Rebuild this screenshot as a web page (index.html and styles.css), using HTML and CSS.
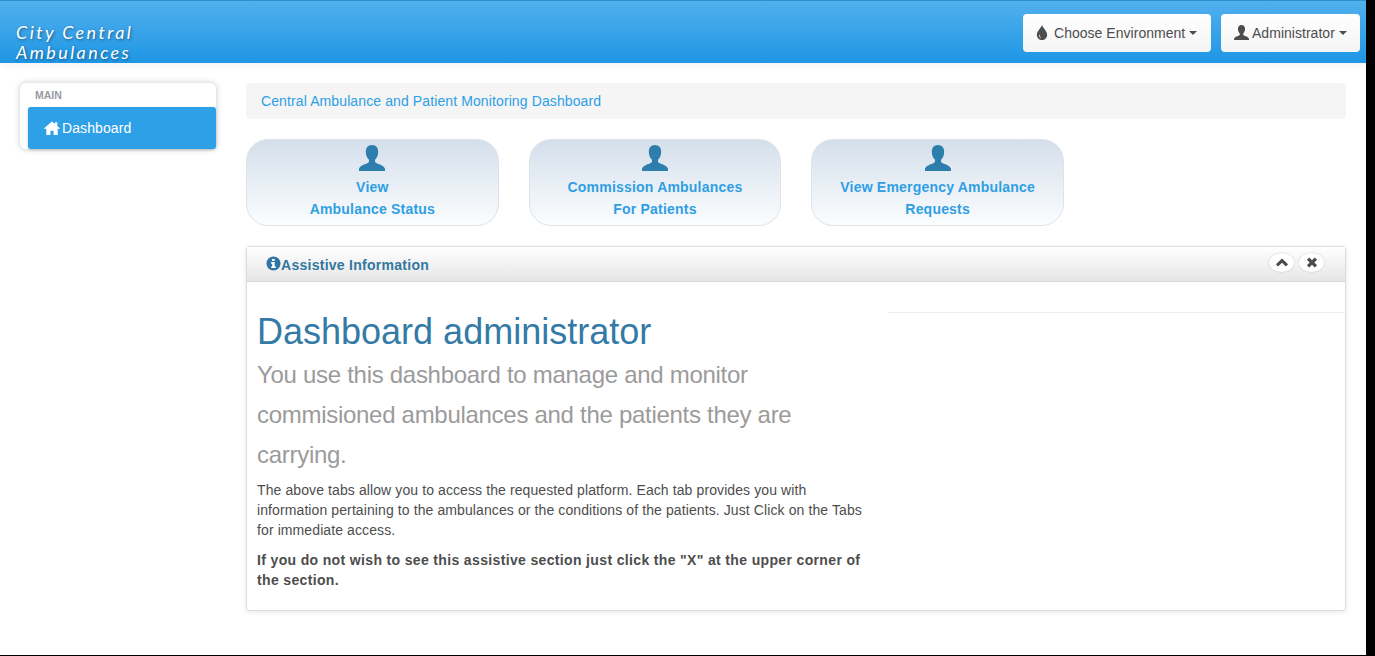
FILE: index.html
```html
<!DOCTYPE html>
<html lang="en">
<head>
<meta charset="utf-8">
<title>City Central Ambulances</title>
<link rel="stylesheet" href="styles.css">
</head>
<body>
<svg class="defs" width="0" height="0" aria-hidden="true">
  <symbol id="user" viewBox="0 0 24 24"><path d="M12 0C8 0 6.300 2.900 6.300 6.500c0 3 1.200 5.500 2.900 7v1.500c0 1-.8 1.500-2 2C4.500 18 1 19 0 22v2h24v-2c-1-3-4.500-4-7.200-5-1.200-.5-2-1-2-2v-1.500c1.700-1.500 2.900-4 2.900-7C17.700 2.900 16 0 12 0z"/></symbol>
</svg>
<div class="app">
  <header class="navbar">
    <a class="brand">City Central<br>Ambulances</a>
    <div class="nav-actions">
      <button class="nav-btn env">
        <svg class="ic-drop" viewBox="0 0 14 16"><path fill-rule="evenodd" d="M7 0c.6 2.600 5.500 6.500 5.500 10.300C12.500 13.500 10 16 7 16s-5.500-2.500-5.500-5.700C1.500 6.500 6.400 2.600 7 0zM4 9.500c-.6 2 .4 4 2.300 4.500-1-1-1.800-2.500-2.300-4.500z"/></svg>
        <span class="nav-label">Choose Environment</span><span class="caret"></span>
      </button>
      <button class="nav-btn admin">
        <svg class="ic-user"><use href="#user"/></svg><span class="nav-label">Administrator</span><span class="caret"></span>
      </button>
    </div>
  </header>
  <div class="layout">
    <aside class="sidebar">
      <div class="side-label">MAIN</div>
      <a class="side-item">
        <svg class="ic-home" viewBox="0 0 18 16"><path d="M9 .5 0 8.300l1 1.200 1.500-1.200V16h4.700v-5h3.600v5h4.700V8.300l1.500 1.200 1-1.200-3-2.600V1.500h-2.500v2L9 .5z"/></svg>Dashboard
      </a>
    </aside>
    <main class="content">
      <div class="crumb">Central Ambulance and Patient Monitoring Dashboard</div>
      <div class="tiles">
        <a class="tile"><svg class="ic-tile"><use href="#user"/></svg><span>View</span><span>Ambulance Status</span></a>
        <a class="tile"><svg class="ic-tile"><use href="#user"/></svg><span>Commission Ambulances</span><span>For Patients</span></a>
        <a class="tile"><svg class="ic-tile"><use href="#user"/></svg><span>View Emergency Ambulance</span><span>Requests</span></a>
      </div>
      <section class="panel">
        <div class="panel-head">
          <h2 class="panel-title">
            <svg class="ic-info" viewBox="0 0 16 16"><circle cx="8" cy="8" r="7.500"/><path class="info-i" d="M6.300 3.200h3v2.200h-3zM5.500 6.500h3.800v4.600h1.200v1.800h-5v-1.800h1.100V8.300H5.500z"/></svg>Assistive Information
          </h2>
          <div class="panel-tools">
            <span class="round-btn"><svg viewBox="0 0 12 8"><path d="M6 0 12 5.800 10 8 6 4.200 2 8 0 5.800z"/></svg></span>
            <span class="round-btn"><svg viewBox="0 0 12 12"><path d="M3 .5 6 3.500 9 .5 11.500 3 8.500 6l3 3L9 11.500l-3-3-3 3L.5 9l3-3-3-3z"/></svg></span>
          </div>
        </div>
        <div class="panel-body">
          <div class="intro">
            <h1>Dashboard administrator</h1>
            <p class="lead">You use this dashboard to manage and monitor commisioned ambulances and the patients they are carrying.</p>
            <p class="copy">The above tabs allow you to access the requested platform. Each tab provides you with information pertaining to the ambulances or the conditions of the patients. Just Click on the Tabs for immediate access.</p>
            <p class="copy strong">If you do not wish to see this assistive section just click the "X" at the upper corner of the section.</p>
          </div>
          <div class="aside-rule"></div>
        </div>
      </section>
    </main>
  </div>
</div>
</body>
</html>
```
FILE: styles.css
```css
* { box-sizing: border-box; }
html, body { margin: 0; height: 100%; background: #000; overflow: hidden; }
body { font-family: "Liberation Sans", Arial, sans-serif; font-size: 14px; color: #4d4d4d; }
.defs { position: absolute; }
.app { width: 1366px; height: 655px; background: #fff; }

.navbar {
  height: 63px;
  border-top: 1px solid #2d8fd0;
  background: linear-gradient(#52b0ee, #1e96e4);
  display: flex;
  justify-content: space-between;
  align-items: flex-start;
  padding-right: 6px;
  box-shadow: 0 2px 8px rgba(0,0,0,.06);
}
.brand {
  font-family: Lato, sans-serif;
  font-style: italic;
  font-size: 18px;
  font-weight: 400;
  line-height: 20px;
  letter-spacing: 2.400px;
  color: #fff;
  text-shadow: 1px 1px 3px rgba(0,0,0,.45);
  padding: 21px 0 0 16px;
  height: 62px;
  overflow: hidden;
}
.nav-actions { display: flex; gap: 10px; padding-top: 13px; }
.nav-btn {
  height: 38px;
  border: 0;
  border-radius: 4px;
  background: linear-gradient(#fff, #f4f4f4);
  font: 14px "Liberation Sans", Arial, sans-serif;
  color: #4d4d4d;
  display: flex;
  align-items: center;
  padding: 0;
}
.nav-label { letter-spacing: .03px; }
.env { width: 188px; padding-left: 12px; }
.env .ic-drop { margin-right: 5px; }
.admin { width: 139px; padding-left: 13px; }
.caret {
  margin-left: 4px;
  border-top: 4px solid #4d4d4d;
  border-left: 4px solid transparent;
  border-right: 4px solid transparent;
}
.ic-drop { width: 14px; height: 15px; fill: #4d4d4d; margin-top: -2px; }
.ic-user { width: 15px; height: 15px; fill: #4d4d4d; margin: -2px 3px 0 0; }

.layout { display: flex; align-items: flex-start; padding-top: 20px; }
.sidebar {
  width: 196px;
  height: 66px;
  margin-left: 20px;
  background: #fff;
  border-radius: 6px;
  box-shadow: 0 0 6px rgba(0,0,0,.22);
  padding-left: 8px;
}
.side-label {
  font-size: 10.500px;
  font-weight: 700;
  color: #9a9a9f;
  line-height: 25px;
  height: 24px;
  padding-left: 7px;
}
.side-item {
  display: flex;
  align-items: center;
  height: 42px;
  background: #2da0e8;
  color: #fff;
  border-radius: 3px;
  padding-left: 16px;
  font-size: 14px;
  letter-spacing: .1px;
  box-shadow: 0 1px 3px rgba(0,0,0,.2);
}
.ic-home { width: 16px; height: 14px; fill: #fff; margin-right: 2px; }

.content { width: 1100px; margin-left: 30px; }
.crumb {
  height: 36px;
  background: #f5f5f5;
  border-radius: 4px;
  color: #2d9fe6;
  font-size: 14px;
  letter-spacing: .11px;
  line-height: 36px;
  padding-left: 15px;
}
.tiles { display: flex; gap: 30px; margin-top: 20px; }
.tile {
  width: 252.670px;
  height: 87px;
  border: 1px solid #dfe3e8;
  border-radius: 22px;
  background: linear-gradient(#d4dfeb, #fbfdfe);
  display: flex;
  flex-direction: column;
  align-items: center;
  color: #2f9fe3;
  font-size: 14px;
  font-weight: 700;
  letter-spacing: .2px;
  line-height: 22px;
  padding-top: 5px;
}
.ic-tile { width: 26px; height: 26px; fill: #2d7ead; margin-bottom: 5px; flex: none; }

.panel {
  margin-top: 20px;
  height: 365px;
  border: 1px solid #dcdcdc;
  border-radius: 3px;
  box-shadow: 0 1px 5px rgba(0,0,0,.1);
}
.panel-head {
  height: 35px;
  background: linear-gradient(#fff, #e6e6e6);
  border-bottom: 1px solid #d8d8d8;
  display: flex;
  justify-content: space-between;
  align-items: center;
  padding: 0 21px 0 19px;
}
.panel-title {
  margin: 2px 0 0;
  display: flex;
  align-items: center;
  font-size: 14px;
  font-weight: 700;
  letter-spacing: .27px;
  color: #32779f;
}
.ic-info { width: 15px; height: 15px; fill: #2f74a6; margin-top: -3px; }
.info-i { fill: #fff; }
.panel-tools { display: flex; gap: 5px; margin-top: -3px; }
.round-btn {
  width: 25px;
  height: 19px;
  border-radius: 50%;
  background: #fff;
  display: flex;
  align-items: center;
  justify-content: center;
  box-shadow: 0 0 2px rgba(0,0,0,.2);
}
.round-btn svg { width: 12px; height: 11px; fill: #4a4a4a; }
.panel-body { display: flex; align-items: flex-start; }
.intro { width: 641px; padding: 27px 20px 0 10px; flex: none; }
.intro h1 {
  margin: 0;
  font-size: 36px;
  font-weight: 400;
  line-height: 46px;
  color: #337ba6;
}
.lead {
  margin: 0 0 5px;
  font-size: 24px;
  letter-spacing: -.29px;
  line-height: 40px;
  color: #9b9b9b;
}
.copy { margin: 0 0 10px; font-size: 14px; letter-spacing: .1px; line-height: 20px; color: #4d4d4d; }
.strong { font-weight: 700; letter-spacing: .35px; }
.aside-rule { flex: 1; margin-top: 30px; border-top: 1px solid #eee; }
```
